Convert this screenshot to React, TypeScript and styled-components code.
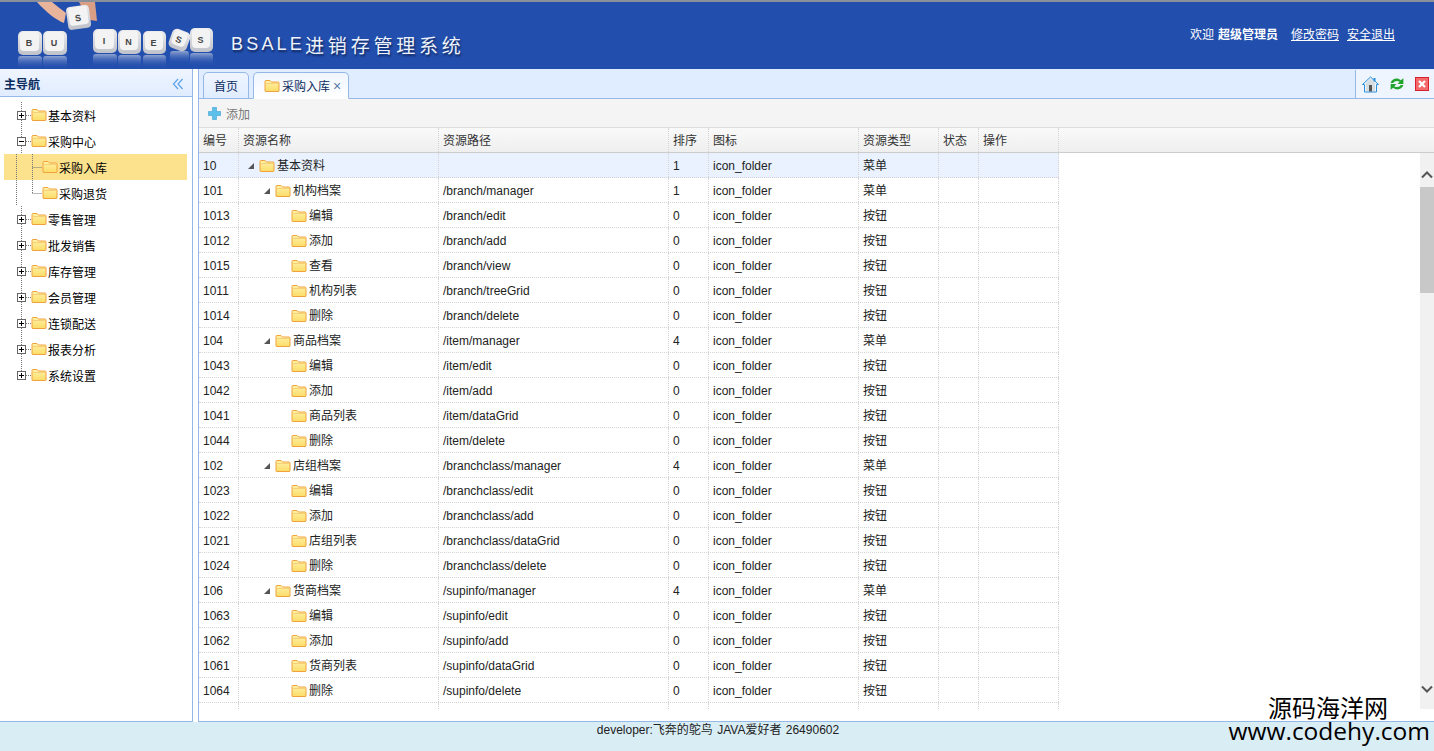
import React, { useId } from "react";
import styled, { createGlobalStyle } from "styled-components";

const Global = createGlobalStyle`
  html, body { margin: 0; padding: 0; height: 100%; overflow: hidden; background: #fff; }
  body { font-family: "Liberation Sans", "Noto Sans CJK SC", sans-serif; font-size: 12px; color: #000; }
  #root { height: 100%; }
`;

const Page = styled.div`
  position: relative;
  display: flex;
  flex-direction: column;
  width: 1434px;
  height: 751px;
  overflow: hidden;
`;
const Banner = styled.header`
  display: flex;
  align-items: flex-start;
  justify-content: space-between;
  height: 67px;
  flex: none;
  border-top: 2px solid #8a8f9c;
  background: #224ead;
  color: #fff;
`;
const Brand = styled.div`
  display: flex;
  align-items: flex-start;
`;
const BrandTitle = styled.div`
  display: flex;
  align-items: center;
  margin: 31px 0 0 15px;
  height: 22px;
  font-family: "Noto Sans CJK SC", "Liberation Sans", sans-serif;
  font-size: 19px;
  white-space: nowrap;
  color: #eef3fb;
  text-shadow: 1px 2px 2px #12285f;
`;
const BrandLatin = styled.span`
  font-family: "Liberation Sans", sans-serif;
  font-size: 18px;
  letter-spacing: 3.2px;
`;
const BrandCn = styled.span`
  letter-spacing: 3.8px;
`;
const Welcome = styled.div`
  display: flex;
  margin: 26px 39px 0 0;
  font-size: 12px;
  line-height: 14px;
  white-space: nowrap;
`;
const Strong = styled.b`
  margin-left: 4px;
  margin-right: 13px;
`;
const TopLink = styled.a<{ $gap: number }>`
  color: #fff;
  text-decoration: underline;
  margin-left: ${(p) => p.$gap}px;
`;

const Main = styled.main`
  flex: 1;
  display: flex;
  min-height: 0;
  background: #fff;
`;
const Side = styled.aside`
  width: 192px;
  flex: none;
  box-sizing: content-box;
  display: flex;
  flex-direction: column;
  border-right: 1px solid #95b8e7;
  border-bottom: 1px solid #95b8e7;
`;
const SideHead = styled.div`
  flex: none;
  display: flex;
  align-items: center;
  justify-content: space-between;
  padding: 2px 8px 0 4px;
  box-sizing: content-box;
  height: 25px;
  border-bottom: 1px solid #95b8e7;
  background: linear-gradient(to bottom, #eff5ff, #e0ecff);
  font-weight: bold;
  color: #0e2d5f;
`;
const Tree = styled.ul`
  list-style: none;
  margin: 0;
  padding: 5px 0 0 4px;
`;
const TreeRow = styled.li<{ $selected?: boolean }>`
  display: flex;
  align-items: center;
  height: 26px;
  width: 183px;
  background: ${(p) => (p.$selected ? "#fde28d" : "transparent")};
`;
const RowLabel = styled.span`
  margin-left: 1px;
  white-space: nowrap;
`;
const Content = styled.section`
  flex: 1;
  min-width: 0;
  margin-left: 5px;
  display: flex;
  flex-direction: column;
  border-left: 1px solid #95b8e7;
  border-bottom: 1px solid #95b8e7;
`;
const TabBar = styled.div`
  height: 29px;
  flex: none;
  display: flex;
  align-items: flex-end;
  justify-content: space-between;
  background: #e0ecff;
  border-bottom: 1px solid #95b8e7;
`;
const Tabs = styled.div`
  display: flex;
  gap: 4px;
  padding-left: 4px;
  margin-bottom: -1px;
`;
const Tab = styled.div<{ $active?: boolean }>`
  display: flex;
  align-items: center;
  gap: 2px;
  box-sizing: border-box;
  height: 27px;
  padding: 0 ${(p) => (p.$active ? "7px 0 10px" : "10px")};
  border: 1px solid #95b8e7;
  border-bottom-color: ${(p) => (p.$active ? "#fff" : "#95b8e7")};
  border-radius: 5px 5px 0 0;
  background: ${(p) =>
    p.$active ? "linear-gradient(to bottom,#eff5ff,#fff)" : "linear-gradient(to bottom,#eff5ff,#e0ecff)"};
  color: #0e2d5f;
`;
const TabClose = styled.span`
  margin-left: 1px;
  font-size: 14px;
  line-height: 14px;
  color: #5a7aa8;
`;
const TabTools = styled.div`
  display: flex;
  align-items: center;
  gap: 10px;
  box-sizing: border-box;
  width: 79px;
  height: 28px;
  padding-left: 6px;
  border-left: 1px solid #95b8e7;
  background: #eff5ff;
`;
const Toolbar = styled.div`
  height: 29px;
  flex: none;
  box-sizing: border-box;
  display: flex;
  align-items: center;
  gap: 5px;
  padding-left: 9px;
  background: #f4f4f4;
  border-bottom: 1px solid #ddd;
  color: #777;
`;
const GridHead = styled.div`
  height: 25px;
  flex: none;
  box-sizing: border-box;
  display: flex;
  background: linear-gradient(to bottom, #f9f9f9, #efefef);
  border-bottom: 1px solid #ccc;
`;
const HeadCell = styled.div<{ $w: number }>`
  width: ${(p) => p.$w}px;
  flex: none;
  box-sizing: border-box;
  padding-left: 4px;
  line-height: 27px;
  color: #333;
  border-right: 1px dotted #d4d4d4;
  white-space: nowrap;
`;
const GridBody = styled.div`
  flex: 1;
  min-height: 0;
  display: flex;
  justify-content: space-between;
  align-items: flex-start;
`;
const GridRows = styled.div`
  height: 556px;
  overflow: hidden;
`;
const GridRow = styled.div<{ $selected?: boolean }>`
  display: flex;
  height: 25px;
  box-sizing: border-box;
  background: ${(p) => (p.$selected ? "#eaf2ff" : "#fff")};
  border-bottom: 1px dotted #d4d4d4;
`;
const Cell = styled.div<{ $w: number }>`
  width: ${(p) => p.$w}px;
  flex: none;
  box-sizing: border-box;
  padding-left: 4px;
  line-height: 26px;
  color: #222;
  border-right: 1px dotted #d4d4d4;
  white-space: nowrap;
`;
const NameCell = styled(Cell)<{ $depth: number }>`
  display: flex;
  align-items: center;
  padding-left: ${(p) => 8 + p.$depth * 16}px;
  padding-top: 1px;
`;
const Arrow = styled.span<{ $hidden: boolean }>`
  width: 0;
  height: 0;
  margin: 1px 5px 0 1px;
  border-left: 6px solid transparent;
  border-bottom: 6px solid ${(p) => (p.$hidden ? "transparent" : "#555")};
`;
const NameText = styled.span`
  margin-left: 2px;
`;
const Scroll = styled.div`
  width: 14px;
  height: 556px;
  flex: none;
  display: flex;
  flex-direction: column;
  align-items: center;
  background: #f1f1f1;
`;
const ScrollCap = styled.div<{ $down?: boolean }>`
  height: 34px;
  flex: none;
  box-sizing: border-box;
  display: flex;
  justify-content: center;
  align-items: ${(p) => (p.$down ? "flex-start" : "flex-end")};
  padding: ${(p) => (p.$down ? "10px 0 0" : "0 0 8px")};
`;
const Thumb = styled.div`
  height: 106px;
  width: 14px;
  flex: none;
  background: #c8c8c8;
`;
const ScrollFill = styled.div`
  flex: 1;
`;
const Footer = styled.footer`
  height: 29px;
  flex: none;
  box-sizing: border-box;
  padding-left: 2px;
  background: #d9edf5;
  text-align: center;
  line-height: 16px;
  word-spacing: 1px;
  color: #222;
`;
const Watermark = styled.div`
  position: absolute;
  right: 4px;
  bottom: 9px;
  text-align: right;
  color: #000;
  font-family: "Noto Sans CJK SC", "Liberation Sans", sans-serif;
  line-height: 1;
  white-space: nowrap;
`;
const MarkCn = styled.div`
  margin-right: 42px;
  font-size: 24px;
  line-height: 24px;
`;
const MarkEn = styled.div`
  font-family: "Open Sans", "Noto Sans", sans-serif;
  font-size: 24.5px;
  line-height: 23px;
`;

const Folder = () => {
  const id = useId();
  return (
    <svg width="16" height="16" viewBox="0 0 16 16" style={{ flex: "none" }}>
      <defs>
        <linearGradient id={id} x1="0" y1="0" x2="0" y2="1">
          <stop offset="0" stopColor="#fff2a8" />
          <stop offset="1" stopColor="#fbdc68" />
        </linearGradient>
      </defs>
      <path
        d="M1 3.5 Q1 2.5 2 2.5 H6 L7.5 4 H14 Q15 4 15 5 V13 Q15 13.5 14 13.5 H2 Q1 13.5 1 13 Z"
        fill={`url(#${id})`}
        stroke="#f0a23c"
      />
      <path d="M1.5 5.5 H14.5" stroke="#f6cf7a" />
    </svg>
  );
};

const TopConnector = ({ open, last }: { open?: boolean; last?: boolean }) => (
  <svg width="27" height="26" viewBox="0 0 27 26" style={{ flex: "none" }}>
    <path d={`M17.5 0 V${last ? 13 : 26} M22 13.5 H27`} stroke="#777" strokeDasharray="1 1" />
    <rect x="13.5" y="9.5" width="8" height="8" fill="#fff" stroke="#666" />
    <path d={`M15 13.5 H20 ${open ? "" : "M17.5 11 V16"}`} stroke="#000" />
  </svg>
);

const ChildConnector = ({ last }: { last?: boolean }) => (
  <svg width="38" height="26" viewBox="0 0 38 26" style={{ flex: "none" }}>
    <path
      d={`M12.5 0 V26 M28.5 0 V${last ? 13.5 : 26} M28.5 13.5 H38`}
      stroke="#777"
      strokeDasharray="1 1"
    />
  </svg>
);

const Collapse = () => (
  <svg width="12" height="12" viewBox="0 0 12 12">
    <path d="M6 1 L1.5 6 L6 11 M10.5 1 L6 6 L10.5 11" fill="none" stroke="#5ba3e8" strokeWidth="1.2" />
  </svg>
);
const Plus = () => (
  <svg width="13" height="13" viewBox="0 0 13 13" style={{ flex: "none" }}>
    <path d="M4.5 0.5 H8.5 V4.5 H12.5 V8.5 H8.5 V12.5 H4.5 V8.5 H0.5 V4.5 H4.5 Z" fill="#5cc0ea" stroke="#3a9fd3" strokeWidth="0.6" />
  </svg>
);
const Home = () => (
  <svg width="17" height="17" viewBox="0 0 17 17" style={{ flex: "none" }}>
    <path d="M8.5 1 L16.5 8.5 H14.5 V16 H2.5 V8.5 H0.5 Z" fill="#eaf5fd" stroke="#2b8fdc" />
    <path d="M8.5 2.5 L13 7 V15 H4 V7 Z" fill="#d8dde0" />
    <rect x="7" y="9" width="3" height="6.5" fill="#555" />
    <rect x="11.5" y="2" width="2" height="3.5" fill="#2b8fdc" />
  </svg>
);
const Refresh = () => (
  <svg width="16" height="16" viewBox="0 0 15 15" style={{ flex: "none" }}>
    <path d="M1.5 6.5 C2.5 2.5 8 1 11 4 L13.5 2 V7.5 H8 L10 5.5 C8 4 5 4.5 4 6.5 Z" fill="#22a52e" />
    <path d="M13.5 8.5 C12.5 12.5 7 14 4 11 L1.5 13 V7.5 H7 L5 9.5 C7 11 10 10.5 11 8.5 Z" fill="#22a52e" />
  </svg>
);
const CloseTool = () => (
  <svg width="14" height="14" viewBox="0 0 14 14" style={{ flex: "none" }}>
    <rect x="0.5" y="0.5" width="13" height="13" fill="#f36a6a" stroke="#d9202e" />
    <path d="M4 4 L10 10 M10 4 L4 10" stroke="#fff" strokeWidth="2.2" />
  </svg>
);
const Chevron = ({ down }: { down?: boolean }) => (
  <svg width="12" height="8" viewBox="0 0 12 8">
    <path d={down ? "M1 1.5 L6 6.5 L11 1.5" : "M1 6.5 L6 1.5 L11 6.5"} fill="none" stroke="#555" strokeWidth="2" />
  </svg>
);

const Key = ({ x, y, w = 24, h = 24, c, r = 0 }: { x: number; y: number; w?: number; h?: number; c: string; r?: number }) => (
  <g>
    <rect x={x} y={y + h + 1} width={w} height="13" rx="3" fill="url(#keyReflect)" />
    <g transform={`rotate(${r} ${x + w / 2} ${y + h / 2})`}>
      <rect x={x} y={y} width={w} height={h} rx="5" fill="url(#keyFace)" />
      <rect x={x + 2} y={y + 1} width={w - 5} height={h - 5} rx="4" fill="#f3f3f4" />
      <text x={x + w / 2 - 1} y={y + h / 2 + 3} fontSize="9" fontWeight="bold" textAnchor="middle" fill="#444" fontFamily="Liberation Sans">
        {c}
      </text>
    </g>
  </g>
);

const Logo = () => (
  <svg width="216" height="67" viewBox="0 2 216 67" style={{ flex: "none" }}>
    <defs>
      <linearGradient id="keyFace" x1="0" y1="0" x2="0" y2="1">
        <stop offset="0" stopColor="#ececee" />
        <stop offset="1" stopColor="#bfc2ca" />
      </linearGradient>
      <linearGradient id="keyReflect" x1="0" y1="0" x2="0" y2="1">
        <stop offset="0" stopColor="#aab8d9" stopOpacity="0.8" />
        <stop offset="1" stopColor="#224ead" stopOpacity="0" />
      </linearGradient>
    </defs>
    <path d="M37 2 H52 C57 6 62 10 66 13 L64 23 C56 20 46 12 37 2 Z" fill="#e8b59c" />
    <path d="M79 2 H95 L97 21 L90 20 C86 14 82 8 79 2 Z" fill="#d99f86" />
    <Key x={18} y={31} c="B" />
    <Key x={43} y={31} c="U" />
    <g transform="rotate(-8 78 17)">
      <rect x="67" y="6" width="23" height="23" rx="4" fill="url(#keyFace)" />
      <rect x="69" y="7" width="19" height="18" rx="3" fill="#f3f3f4" />
      <text x="78" y="21" fontSize="9" fontWeight="bold" textAnchor="middle" fill="#444" fontFamily="Liberation Sans">S</text>
    </g>
    <Key x={93} y={29} c="I" />
    <Key x={118} y={30} w={23} c="N" />
    <Key x={143} y={31} w={23} h={23} c="E" />
    <Key x={170} y={30} w={19} h={20} c="S" r={20} />
    <Key x={190} y={28} w={23} c="S" />
  </svg>
);

const W = [40, 200, 230, 40, 150, 80, 40, 80];
const heads = ["编号", "资源名称", "资源路径", "排序", "图标", "资源类型", "状态", "操作"];
type Row = [string, number, string, string, string, string];
const rows: Row[] = [
  ["10", 0, "基本资料", "", "1", "菜单"],
  ["101", 1, "机构档案", "/branch/manager", "1", "菜单"],
  ["1013", 2, "编辑", "/branch/edit", "0", "按钮"],
  ["1012", 2, "添加", "/branch/add", "0", "按钮"],
  ["1015", 2, "查看", "/branch/view", "0", "按钮"],
  ["1011", 2, "机构列表", "/branch/treeGrid", "0", "按钮"],
  ["1014", 2, "删除", "/branch/delete", "0", "按钮"],
  ["104", 1, "商品档案", "/item/manager", "4", "菜单"],
  ["1043", 2, "编辑", "/item/edit", "0", "按钮"],
  ["1042", 2, "添加", "/item/add", "0", "按钮"],
  ["1041", 2, "商品列表", "/item/dataGrid", "0", "按钮"],
  ["1044", 2, "删除", "/item/delete", "0", "按钮"],
  ["102", 1, "店组档案", "/branchclass/manager", "4", "菜单"],
  ["1023", 2, "编辑", "/branchclass/edit", "0", "按钮"],
  ["1022", 2, "添加", "/branchclass/add", "0", "按钮"],
  ["1021", 2, "店组列表", "/branchclass/dataGrid", "0", "按钮"],
  ["1024", 2, "删除", "/branchclass/delete", "0", "按钮"],
  ["106", 1, "货商档案", "/supinfo/manager", "4", "菜单"],
  ["1063", 2, "编辑", "/supinfo/edit", "0", "按钮"],
  ["1062", 2, "添加", "/supinfo/add", "0", "按钮"],
  ["1061", 2, "货商列表", "/supinfo/dataGrid", "0", "按钮"],
  ["1064", 2, "删除", "/supinfo/delete", "0", "按钮"],
  ["", 2, "", "", "", ""],
];

const topBefore = ["基本资料"];
const topAfter = ["零售管理", "批发销售", "库存管理", "会员管理", "连锁配送", "报表分析", "系统设置"];

export default function App() {
  return (
    <Page>
      <Global />
      <Banner>
        <Brand>
          <Logo />
          <BrandTitle>
            <BrandLatin>BSALE</BrandLatin>
            <BrandCn>进销存管理系统</BrandCn>
          </BrandTitle>
        </Brand>
        <Welcome>
          <span>欢迎</span>
          <Strong>超级管理员</Strong>
          <TopLink $gap={0}>修改密码</TopLink>
          <TopLink $gap={8}>安全退出</TopLink>
        </Welcome>
      </Banner>
      <Main>
        <Side>
          <SideHead>
            <span>主导航</span>
            <Collapse />
          </SideHead>
          <Tree>
            {topBefore.map((t) => (
              <TreeRow key={t}>
                <TopConnector />
                <Folder />
                <RowLabel>{t}</RowLabel>
              </TreeRow>
            ))}
            <TreeRow>
              <TopConnector open />
              <Folder />
              <RowLabel>采购中心</RowLabel>
            </TreeRow>
            <TreeRow $selected>
              <ChildConnector />
              <Folder />
              <RowLabel>采购入库</RowLabel>
            </TreeRow>
            <TreeRow>
              <ChildConnector last />
              <Folder />
              <RowLabel>采购退货</RowLabel>
            </TreeRow>
            {topAfter.map((t, i) => (
              <TreeRow key={t}>
                <TopConnector last={i === topAfter.length - 1} />
                <Folder />
                <RowLabel>{t}</RowLabel>
              </TreeRow>
            ))}
          </Tree>
        </Side>
        <Content>
          <TabBar>
            <Tabs>
              <Tab>首页</Tab>
              <Tab $active>
                <Folder />
                采购入库
                <TabClose>×</TabClose>
              </Tab>
            </Tabs>
            <TabTools>
              <Home />
              <Refresh />
              <CloseTool />
            </TabTools>
          </TabBar>
          <Toolbar>
            <Plus />
            添加
          </Toolbar>
          <GridHead>
            {heads.map((h, i) => (
              <HeadCell key={h} $w={W[i]}>
                {h}
              </HeadCell>
            ))}
          </GridHead>
          <GridBody>
            <GridRows>
              {rows.map((r, i) => (
                <GridRow key={i} $selected={i === 0}>
                  <Cell $w={W[0]}>{r[0]}</Cell>
                  <NameCell $w={W[1]} $depth={r[1]}>
                    {r[0] && <Arrow $hidden={r[1] === 2} />}
                    {r[0] && <Folder />}
                    <NameText>{r[2]}</NameText>
                  </NameCell>
                  <Cell $w={W[2]}>{r[3]}</Cell>
                  <Cell $w={W[3]}>{r[4]}</Cell>
                  <Cell $w={W[4]}>{r[0] && "icon_folder"}</Cell>
                  <Cell $w={W[5]}>{r[5]}</Cell>
                  <Cell $w={W[6]} />
                  <Cell $w={W[7]} />
                </GridRow>
              ))}
            </GridRows>
            <Scroll>
              <ScrollCap>
                <Chevron />
              </ScrollCap>
              <Thumb />
              <ScrollFill />
              <ScrollCap $down>
                <Chevron down />
              </ScrollCap>
            </Scroll>
          </GridBody>
        </Content>
      </Main>
      <Footer>developer:飞奔的鸵鸟 JAVA爱好者 26490602</Footer>
      <Watermark>
        <MarkCn>源码海洋网</MarkCn>
        <MarkEn>www.codehy.com</MarkEn>
      </Watermark>
    </Page>
  );
}
